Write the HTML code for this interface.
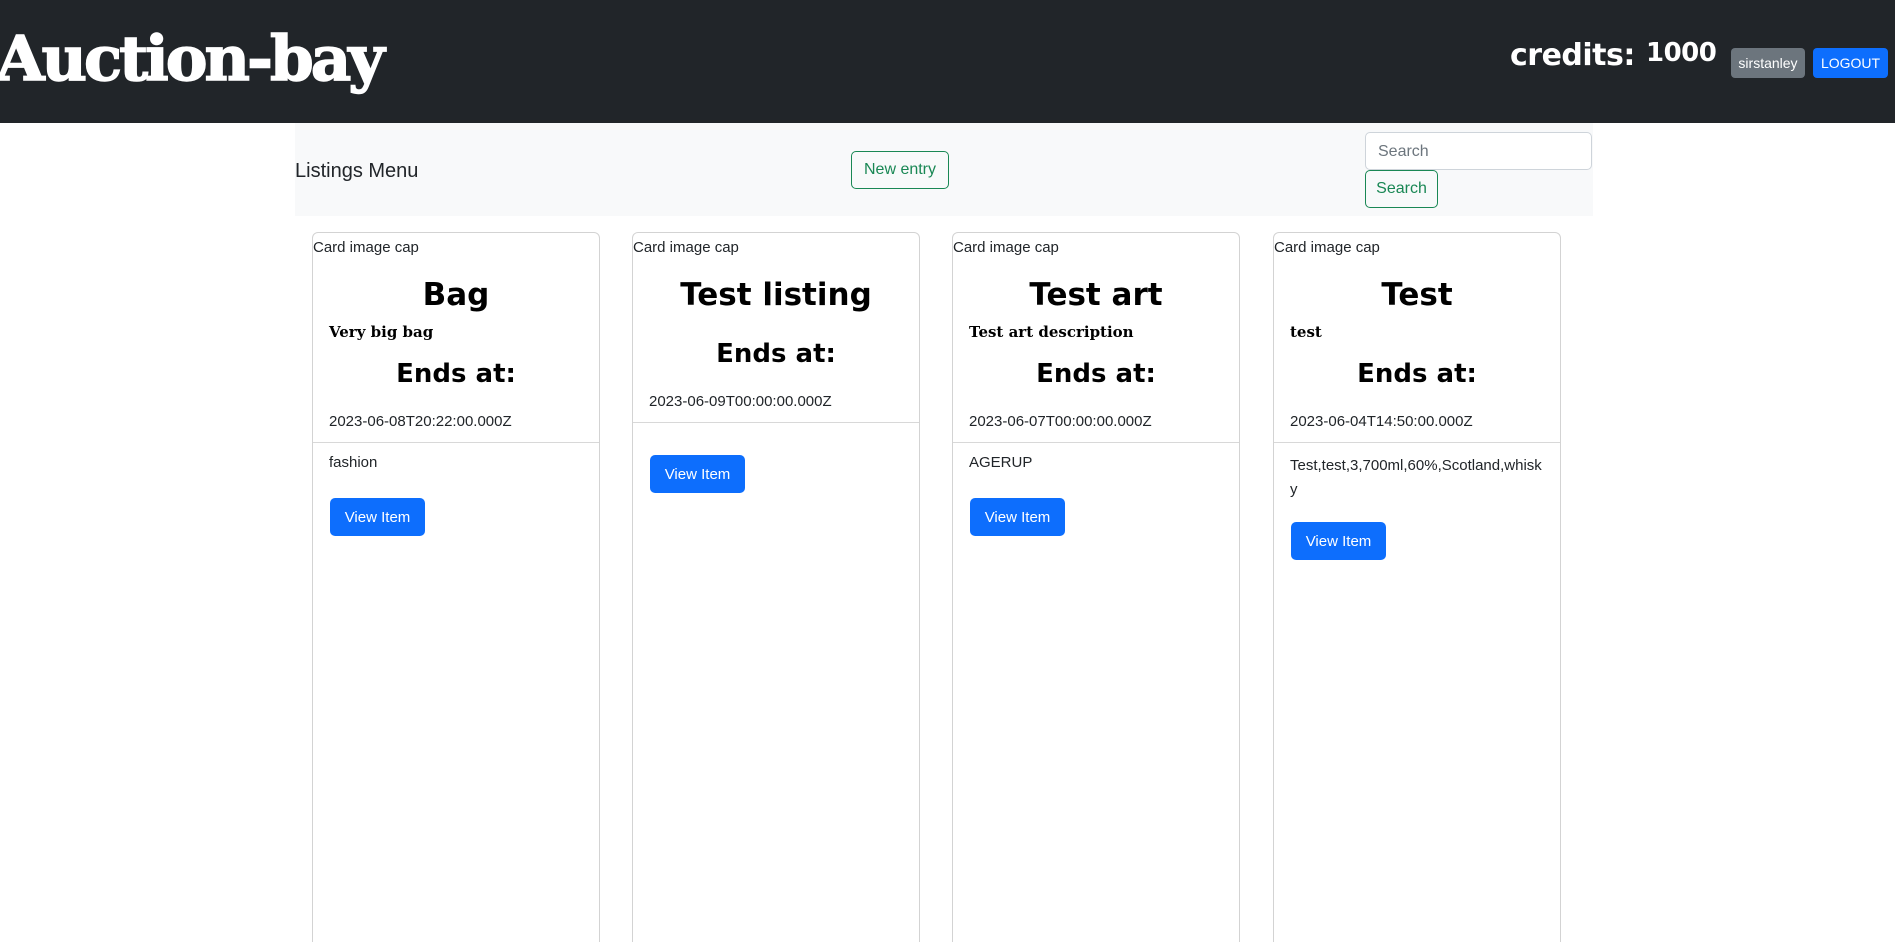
<!DOCTYPE html>
<html style="height:942px;overflow:hidden"><head><meta charset="utf-8"><style>
*{box-sizing:border-box;margin:0;padding:0}
body{width:1895px;height:942px;overflow:hidden;background:#fff;font-family:"Liberation Sans",sans-serif;color:#212529;position:relative}
.hdr{position:absolute;left:0;top:0;width:1895px;height:123px;background:#212529}
.logo{position:absolute;left:-4px;top:22px;font-family:"DejaVu Serif",serif;font-weight:900;font-size:62px;color:#fff;letter-spacing:-3px;transform:scaleX(1.01);transform-origin:left;-webkit-text-stroke:1.5px #fff}
.cred{position:absolute;left:1510px;top:38px;color:#fff;font-family:"DejaVu Sans",sans-serif;font-weight:bold;font-size:30px;letter-spacing:-0.5px}
.num{position:absolute;left:1646px;top:38px;color:#fff;font-family:"DejaVu Sans",sans-serif;font-weight:bold;font-size:26px;letter-spacing:-0.5px}
.btn{position:absolute;font-size:14px;border-radius:4px;display:flex;align-items:center;justify-content:center}
.nav{position:absolute;left:295px;top:123px;width:1298px;height:93px;background:#f8f9fa}
.card{position:absolute;top:232px;width:288px;height:716px;border:1px solid #d3d3d3;border-radius:6px;font-size:15px}
.cap{position:absolute;left:0;top:6px}
.t{position:absolute;left:0;width:100%;text-align:center;font-family:"DejaVu Sans",sans-serif;font-weight:bold;font-size:31px;color:#000}
.e{position:absolute;left:0;width:100%;text-align:center;font-family:"DejaVu Sans",sans-serif;font-weight:bold;font-size:26px;color:#000}
.d{position:absolute;left:16px;font-family:"DejaVu Serif",serif;font-weight:bold;font-size:15px;color:#000}
.p{position:absolute;left:16px}
.hr{position:absolute;left:0;width:100%;border-top:1px solid #d8d8d8}
.vb{position:absolute;left:17px;width:95px;height:38px;background:#0d6efd;color:#fff;border-radius:5px;display:flex;align-items:center;justify-content:center;font-size:15px}
</style></head><body>
<div class="hdr">
<div class="logo">Auction-bay</div>
<div class="cred">credits:</div>
<div class="num">1000</div>
<div class="btn" style="left:1731px;top:48px;width:74px;height:30px;background:#6c757d;color:#fff">sirstanley</div>
<div class="btn" style="left:1813px;top:48px;width:75px;height:30px;background:#0d6efd;color:#fff">LOGOUT</div>
</div>
<div class="nav">
<div style="position:absolute;left:0;top:37px;font-size:20px">Listings Menu</div>
<div class="btn" style="left:556px;top:28px;width:98px;height:38px;border:1px solid #198754;color:#198754;font-size:16px;border-radius:5px">New entry</div>
<div style="position:absolute;left:1070px;top:9px;width:227px;height:38px;background:#fff;border:1px solid #ced4da;border-radius:5px;padding:10px 12px;font-size:16px;color:#6c757d">Search</div>
<div class="btn" style="left:1070px;top:47px;width:73px;height:38px;border:1px solid #198754;color:#198754;font-size:16px;border-radius:5px">Search</div>
</div>

<div class="card" style="left:312px">
<div class="cap">Card image cap</div>
<div class="t" style="top:44px">Bag</div>
<div class="d" style="top:90px">Very big bag</div>
<div class="e" style="top:126px">Ends at:</div>
<div class="p" style="top:180px">2023-06-08T20:22:00.000Z</div>
<div class="hr" style="top:209px"></div>
<div class="p" style="top:221px">fashion</div>
<div class="vb" style="top:265px">View Item</div>
</div>

<div class="card" style="left:632px">
<div class="cap">Card image cap</div>
<div class="t" style="top:44px">Test listing</div>
<div class="e" style="top:106px">Ends at:</div>
<div class="p" style="top:160px">2023-06-09T00:00:00.000Z</div>
<div class="hr" style="top:189px"></div>
<div class="vb" style="top:222px">View Item</div>
</div>

<div class="card" style="left:952px">
<div class="cap">Card image cap</div>
<div class="t" style="top:44px">Test art</div>
<div class="d" style="top:90px">Test art description</div>
<div class="e" style="top:126px">Ends at:</div>
<div class="p" style="top:180px">2023-06-07T00:00:00.000Z</div>
<div class="hr" style="top:209px"></div>
<div class="p" style="top:221px">AGERUP</div>
<div class="vb" style="top:265px">View Item</div>
</div>

<div class="card" style="left:1273px">
<div class="cap">Card image cap</div>
<div class="t" style="top:44px">Test</div>
<div class="d" style="top:90px">test</div>
<div class="e" style="top:126px">Ends at:</div>
<div class="p" style="top:180px">2023-06-04T14:50:00.000Z</div>
<div class="hr" style="top:209px"></div>
<div class="p" style="top:221px;line-height:24px;width:256px;word-break:break-all">Test,test,3,700ml,60%,Scotland,whisky</div>
<div class="vb" style="top:289px">View Item</div>
</div>
</body></html>
